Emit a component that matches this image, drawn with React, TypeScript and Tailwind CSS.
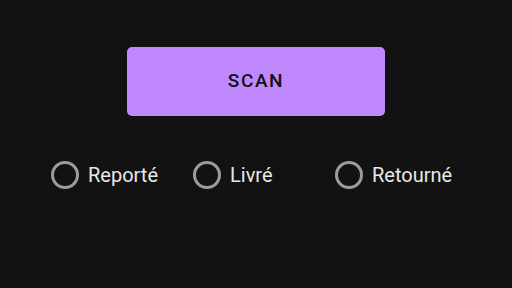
const OPTIONS = ["Reporté", "Livré", "Retourné"];

export default function App() {
  return (
    <div
      className="flex h-[288px] w-[512px] flex-col items-center bg-[#121212]"
      style={{ fontFamily: "Roboto, 'Liberation Sans', sans-serif" }}
    >
      <button className="mt-[47px] flex h-[69px] w-[258px] items-center justify-center rounded-[5px] bg-[#bf88fc] text-[19px] font-medium tracking-[1.6px] text-[#111]">
        SCAN
      </button>

      <div className="mt-[44px] flex w-full pl-[51px]">
        {OPTIONS.map((label) => (
          <label key={label} className="flex w-[142px] items-center gap-[9px]">
            <span className="h-[28px] w-[28px] shrink-0 rounded-full border-[3px] border-[#9c9c9c]" />
            <span className="text-[20px] text-[#e8e8e8]">{label}</span>
          </label>
        ))}
      </div>
    </div>
  );
}
